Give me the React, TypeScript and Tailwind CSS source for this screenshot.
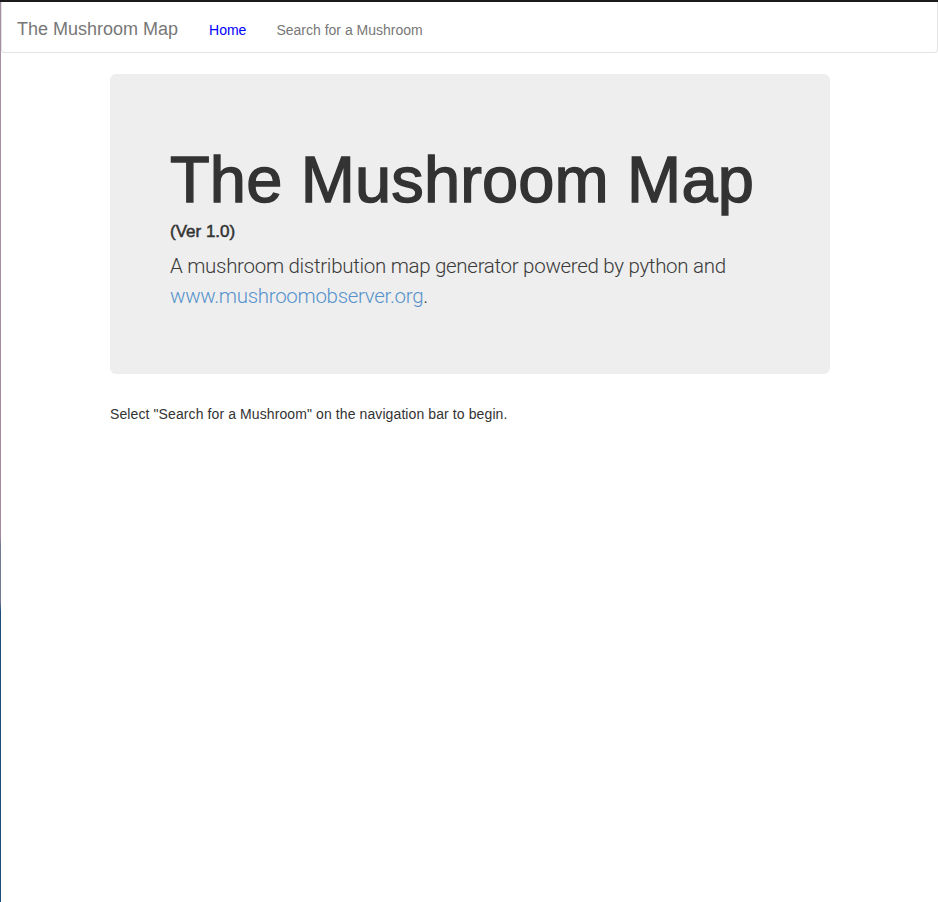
import React from "react";

export default function App() {
  return (
    <div className="h-[902px] w-[938px] flex flex-col bg-white overflow-hidden font-['Liberation_Sans',Arial,sans-serif]">
      <div className="h-[2px] bg-[#1b1b1b] shrink-0" />
      <div className="flex flex-1 min-h-0">
        <div className="w-px shrink-0 bg-[linear-gradient(to_bottom,#a68fa4_0px,#a38aa0_535px,#737897_545px,#737897_600px,#1d4b7a_610px,#1d4b7a_100%)]" />
        <div className="flex-1 min-w-0">
          <nav className="h-[51px] border-x border-b border-[#e2e2e2] rounded-b-[4px] bg-white flex items-start pt-[17px] pl-[15px]">
            <span className="text-[18px] leading-[20px] text-[#777777]">The Mushroom Map</span>
            <a className="ml-[31px] text-[14px] leading-[20px] text-[#0000ff] pt-px">Home</a>
            <a className="ml-[30px] text-[14px] leading-[20px] text-[#777777] pt-px">Search for a Mushroom</a>
          </nav>
          <div className="ml-[109px] w-[720px]">
            <div className="mt-[21px] h-[300px] rounded-[6px] bg-[#eeeeee] pl-[60px] pt-[70px]">
              <h1 className="text-[65px] leading-[71.5px] text-[#333333] font-normal tracking-[0.15px] [-webkit-text-stroke:1.4px_#333333]">The Mushroom Map</h1>
              <div className="mt-[6px] text-[17px] leading-[20px] font-normal text-[#333333] [-webkit-text-stroke:0.5px_#333333]">(Ver 1.0)</div>
              <p className="mt-[9px] text-[20.5px] leading-[30.5px] font-light tracking-[-0.3px] text-[#3a3a3a] font-['Roboto',sans-serif]">
                A mushroom distribution map generator powered by python and{" "}
                <br />
                <a className="text-[#5592cc]">www.mushroomobserver.org</a>.
              </p>
            </div>
            <p className="mt-[30px] text-[14px] leading-[20px] text-[#333333] tracking-[0.1px]">
              Select "Search for a Mushroom" on the navigation bar to begin.
            </p>
          </div>
        </div>
      </div>
    </div>
  );
}
